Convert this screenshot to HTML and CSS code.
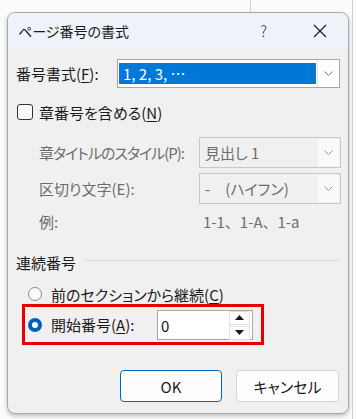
FILE: index.html
```html
<!DOCTYPE html>
<html lang="ja">
<head>
  <meta charset="UTF-8">
  <title>ページ番号の書式</title>
  <link rel="stylesheet" href="styles.css">
</head>
<body>
  <div class="dialog">
    <div class="titlebar">
      <span class="title">ページ番号の書式</span>
      <span class="help">?</span>
      <span class="close">
        <svg width="14" height="14" viewBox="0 0 14 14"><path d="M1 1 L13 13 M13 1 L1 13" stroke="#1a1a1a" stroke-width="1.2" fill="none"/></svg>
      </span>
    </div>

    <div class="content">
      <div class="format-row">
        <span class="label">番号書式(<u>F</u>):</span>
        <div class="select focus">
          <span class="value selected">1, 2, 3, …</span>
          <span class="arrow">
            <svg width="9" height="5" viewBox="0 0 9 5"><path d="M0.5 0.5 L4.5 4.5 L8.5 0.5" stroke="#777" fill="none"/></svg>
          </span>
        </div>
      </div>

      <div class="check-row">
        <span class="checkbox"></span>
        <span>章番号を含める(<u>N</u>)</span>
      </div>

      <div class="chapter">
        <span class="label narrow">章タイトルのスタイル(P):</span>
        <div class="select disabled">
          <span class="value">見出し 1</span>
          <span class="arrow">
            <svg width="9" height="5" viewBox="0 0 9 5"><path d="M0.5 0.5 L4.5 4.5 L8.5 0.5" stroke="#999" fill="none"/></svg>
          </span>
        </div>
        <span class="label">区切り文字(E):</span>
        <div class="select disabled">
          <span class="value">-　(ハイフン)</span>
          <span class="arrow">
            <svg width="9" height="5" viewBox="0 0 9 5"><path d="M0.5 0.5 L4.5 4.5 L8.5 0.5" stroke="#999" fill="none"/></svg>
          </span>
        </div>
        <span class="label example-label">例:</span>
        <span class="example">1-1、1-A、1-a</span>
      </div>

      <div class="group-head">
        <span>連続番号</span>
        <span class="rule"></span>
      </div>

      <div class="radio-row">
        <span class="radio"></span>
        <span>前のセクションから継続(<u>C</u>)</span>
      </div>

      <div class="start-row">
        <span class="radio checked"></span>
        <span class="start-label">開始番号(<u>A</u>):</span>
        <div class="spin">
          <span class="spin-value">0</span>
          <span class="spin-buttons">
            <span class="spin-btn"><svg width="9" height="5" viewBox="0 0 9 5"><path d="M0 5 L4.5 0 L9 5 Z" fill="#1a1a1a"/></svg></span>
            <span class="spin-btn"><svg width="9" height="5" viewBox="0 0 9 5"><path d="M0 0 L4.5 5 L9 0 Z" fill="#1a1a1a"/></svg></span>
          </span>
        </div>
      </div>

      <div class="buttons">
        <button class="btn primary">OK</button>
        <button class="btn">キャンセル</button>
      </div>
    </div>
  </div>
</body>
</html>
```

FILE: styles.css
```css
body {
  margin: 0;
  height: 419px;
  overflow: hidden;
  font-family: "Noto Sans CJK JP", "Noto Sans", sans-serif;
  font-feature-settings: "palt";
  color: #1a1a1a;
  background:
    linear-gradient(#d2d2d2, #d2d2d2) 250px 0 / 1px 12px no-repeat,
    linear-gradient(#cfcfcf, #cfcfcf) 352px 0 / 1px 419px no-repeat,
    #fbfbfb;
}

.dialog {
  margin: 12px 0 0 7px;
  width: 340px;
  height: 400px;
  border: 1px solid #a8a8a8;
  border-radius: 8px;
  background: #f0f0f0;
  box-shadow: 0 2px 4px rgba(0,0,0,0.25);
  overflow: hidden;
  display: flex;
  flex-direction: column;
}

.titlebar {
  height: 35px;
  background: #eef2f9;
  display: flex;
  align-items: center;
  font-size: 14px;
}

.title {
  margin-left: 10px;
  flex-grow: 1;
}

.help {
  font-size: 15px;
  font-weight: 300;
  margin-right: 46px;
}

.close {
  display: flex;
  margin-right: 21px;
}

.content {
  padding: 0 8px 0 8px;
  font-size: 15px;
}

u {
  text-decoration: underline;
  text-underline-offset: 2px;
}

/* number format */
.format-row {
  margin-top: 11px;
  display: flex;
  align-items: center;
}

.format-row .label {
  width: 101px;
}

.select {
  display: flex;
  align-items: stretch;
  border: 1px solid #b4b4b4;
  box-sizing: border-box;
}

.select.focus {
  width: 223px;
  height: 29px;
  padding: 3px 0 3px 1px;
  background: #fff;
  border-color: #a6a6a6;
}

.select .value {
  flex-grow: 1;
  display: flex;
  align-items: center;
  padding-left: 4px;
}

.select .value.selected {
  background: #0078d7;
  color: #fff;
  outline: 1px dotted #7a5a30;
  outline-offset: -1px;
}

.select .arrow {
  width: 21px;
  display: flex;
  align-items: center;
  justify-content: center;
  background: #fff;
  border-left: 1px solid #e2e2e2;
}

.select.focus .arrow {
  margin: -3px 0 -3px 1px;
}

/* include chapter number */
.check-row {
  margin-top: 14px;
  height: 20px;
  display: flex;
  align-items: center;
  gap: 6px;
}

.checkbox {
  width: 14px;
  height: 14px;
  margin-left: 1px;
  border: 1px solid #333;
  border-radius: 3px;
  background: #fbfbfb;
}

.chapter {
  margin-top: 15px;
  padding-left: 23px;
  display: grid;
  grid-template-columns: 160px 142px;
  row-gap: 5px;
  align-items: center;
  color: #6d6d6d;
}

.chapter .narrow {
  letter-spacing: -1px;
}

.select.disabled {
  height: 31px;
  border-color: #c8c8c8;
  padding: 1px;
}

.select.disabled .value {
  padding-left: 4px;
}

.select.disabled .arrow {
  background: #fafafa;
  border-left: none;
}

.example-label,
.example {
  margin-top: 3px;
  line-height: 20px;
}

.example {
  padding-left: 4px;
  font-feature-settings: normal;
}

/* continuous numbering */
.group-head {
  margin-top: 20px;
  height: 20px;
  display: flex;
  align-items: center;
  gap: 8px;
}

.rule {
  flex-grow: 1;
  height: 1px;
  background: #dcdcdc;
  margin-top: -3px;
}

.radio-row {
  margin-top: 12px;
  height: 20px;
  display: flex;
  align-items: center;
  gap: 9px;
  padding-left: 12px;
}

.radio {
  width: 12px;
  height: 12px;
  border: 1px solid #8a8a8a;
  border-radius: 50%;
  background: #fbfbfb;
  flex-shrink: 0;
}

.radio.checked {
  width: 6px;
  height: 6px;
  border: 4px solid #005fb8;
  background: #fff;
}

.start-row {
  width: 233px;
  height: 35px;
  margin-left: 6px;
  border: 3px solid #e60000;
  display: flex;
  align-items: center;
  padding-left: 3px;
}

.start-label {
  margin-left: 9px;
  width: 106px;
}

.spin {
  width: 96px;
  height: 30px;
  box-sizing: border-box;
  border: 1px solid #a6a6a6;
  background: #fff;
  display: flex;
  align-items: center;
  margin-top: 1px;
}

.spin-value {
  flex-grow: 1;
  padding-left: 3px;
}

.spin-buttons {
  display: flex;
  flex-direction: column;
  gap: 1px;
  margin-right: 2px;
}

.spin-btn {
  width: 19px;
  height: 12px;
  display: flex;
  align-items: center;
  justify-content: center;
  background: #fdfdfd;
  border: 1px solid #e0e0e0;
}

/* buttons */
.buttons {
  margin-top: 25px;
  display: flex;
  justify-content: flex-end;
  gap: 14px;
  padding-right: 1px;
}

.btn {
  font-family: inherit;
  font-feature-settings: "palt";
  font-size: 15px;
  color: #1a1a1a;
  width: 103px;
  height: 32px;
  border: 1px solid #d4d4d4;
  border-radius: 4px;
  background: #fdfdfd;
}

.btn.primary {
  width: 102px;
  border-color: #0067c0;
}
```
